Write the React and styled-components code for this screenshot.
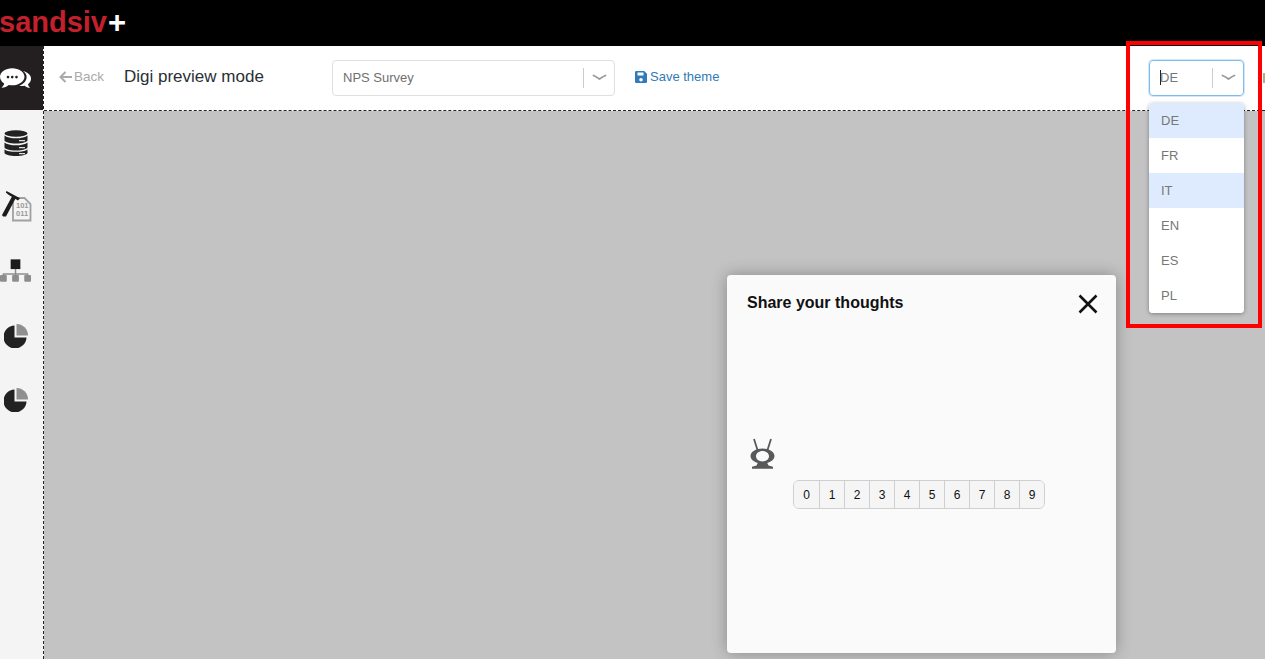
import React from 'react'
import styled, { createGlobalStyle } from 'styled-components'

const GlobalStyle = createGlobalStyle`
    html, body {
        margin: 0;
        height: 100%;
        overflow: hidden;
        font-family: "Liberation Sans", Arial, sans-serif;
        background: #fff;
    }
`

const languages = ['DE', 'FR', 'IT', 'EN', 'ES', 'PL']
const scores = [0, 1, 2, 3, 4, 5, 6, 7, 8, 9]

const Chevron = () => (
    <svg width="15" height="7" viewBox="0 0 15 7" fill="none" stroke="#999" strokeWidth="1.800" strokeLinecap="round">
        <path d="M1.500 1.500 Q4 2.500 7.500 5 Q11 2.500 13.500 1.500" />
    </svg>
)

const ChatIcon = () => (
    <svg width="34" height="25" viewBox="0 0 34 25">
        <path fill="#fff" d="M24.500 4.500c4.800 1.200 8.500 4.300 8.500 8 0 2.500-1.300 4.500-3.200 6 .2 1.500 1 2.800 2.200 3.800-2.500-.1-4.400-.9-6-2.200-1.800.5-3.800.5-5.500.2 5.200-2.200 7.800-5.500 7.800-9.300 0-2.800-1.300-4.900-3.800-6.500z" />
        <path fill="#fff" d="M13 1.500C5.800 1.500 0 5.600 0 10.700c0 3 1.800 5.500 4.500 7.200-.4 1.700-1.500 3.300-3 4.400 3.300-.2 6-1.200 7.900-2.900 1.100.3 2.300.4 3.600.4 7.200 0 13-4 13-9.100S20.200 1.500 13 1.500z" />
        <circle cx="8.500" cy="11" r="1.400" fill="#231f20" />
        <circle cx="13" cy="11" r="1.400" fill="#231f20" />
        <circle cx="17.500" cy="11" r="1.400" fill="#231f20" />
    </svg>
)

const DatabaseIcon = () => (
    <svg width="24" height="26" viewBox="0 0 24 26">
        <ellipse cx="12" cy="3.500" rx="11.500" ry="3.300" fill="#222" />
        <path fill="#222" d="M.5 5.500c2 1.900 6.500 2.800 11.500 2.800s9.500-.9 11.500-2.800v4.700c0 1.800-5.200 3.200-11.500 3.200S.5 12 .5 10.200z" />
        <path fill="#222" d="M.5 12.500c2 1.900 6.500 2.800 11.500 2.800s9.500-.9 11.500-2.800v4.700c0 1.800-5.200 3.200-11.500 3.200S.5 19 .5 17.200z" />
        <path fill="#222" d="M.5 19.200c2 1.900 6.500 2.600 11.500 2.600s9.500-.7 11.500-2.600v3.600c0 1.800-5.200 3.200-11.500 3.200S.5 24.600.5 22.800z" />
        <path stroke="#ddd" strokeWidth="1.200" d="M15 10.700h6M15 17.600h6M15 23.700h6" />
    </svg>
)

const MiningIcon = () => (
    <svg width="31" height="31" viewBox="0 0 31 31">
        <path fill="#f4f4f4" stroke="#a0a0a0" strokeWidth="1.800" d="M12 7h11.500l6 6v16.500H12z" />
        <DocDigits x="15" y="17">101</DocDigits>
        <DocDigits x="15" y="25">011</DocDigits>
        <path fill="#1c1c1c" d="M11 5.500 14.500 7.500 5 25.500 2 25.500 1 24z" />
        <path fill="#1c1c1c" d="M5.500 0 19 7.200 17 9.500 7.500 3.800 4.800 1.500z" />
    </svg>
)

const TreeIcon = () => (
    <svg width="33" height="24" viewBox="0 0 33 24">
        <rect x="11" y="0" width="10" height="10" fill="#1d1d1d" />
        <path stroke="#8d8d8d" strokeWidth="1.500" fill="none" d="M16 10v5M3.500 18v-3h25v3M16 15v3" />
        <rect x="0" y="16" width="7" height="7" rx="1" fill="#8d8d8d" />
        <rect x="12.500" y="16" width="7" height="7" rx="1" fill="#8d8d8d" />
        <rect x="25" y="16" width="7" height="7" rx="1" fill="#8d8d8d" />
    </svg>
)

const PieIcon = () => (
    <svg width="24" height="24" viewBox="0 0 24 24">
        <path fill="#222" d="M10.500 1.500v12h12A11.500 11.500 0 1 1 10.500 1.500z" />
        <path fill="#8f8f8f" d="M12.500 0A11.500 11.500 0 0 1 24 11.500H12.500z" />
    </svg>
)

const SaveIcon = () => (
    <svg width="12" height="12" viewBox="0 0 12 12">
        <path fill="#337ab7" fillRule="evenodd" d="M1.200 0h8L12 2.800v8A1.200 1.200 0 0 1 10.800 12H1.200A1.200 1.200 0 0 1 0 10.800V1.200A1.200 1.200 0 0 1 1.200 0zM2.500 1.500v3h6v-3zM6 7a1.800 1.800 0 1 0 0 3.600A1.800 1.800 0 0 0 6 7z" />
    </svg>
)

const BackArrow = () => (
    <svg width="13" height="12" viewBox="0 0 13 12" fill="none" stroke="#aaa" strokeWidth="2">
        <path d="M6.500 1 1.500 6l5 5M2 6h11" />
    </svg>
)

const RobotIcon = () => (
    <svg width="26" height="32" viewBox="0 0 26 32">
        <path stroke="#58595b" strokeWidth="1.800" d="M4 1 7.500 12M21 1 17.500 12" />
        <path fill="#58595b" fillRule="evenodd" d="M12.500 10.500c6.600 0 12 3.400 12 7.500s-5.400 7.500-12 7.500S.5 22.100.5 18s5.400-7.500 12-7.500zm0 2.500c-3.600 0-6.500 2.400-6.500 5.300s2.900 5.200 6.500 5.200 6.500-2.300 6.500-5.200-2.900-5.300-6.500-5.300z" />
        <path fill="#58595b" d="M8 24.500h9l1.500 3 4.500 1.200v2H2v-2l4.500-1.200z" />
    </svg>
)

const CloseIcon = () => (
    <svg width="20" height="20" viewBox="0 0 20 20" stroke="#111" strokeWidth="2.600">
        <path d="M1.500 1.500 18.500 18.500M18.500 1.500 1.500 18.500" />
    </svg>
)

const App = () => {
    return (
        <Page>
            <GlobalStyle />
            <TopBar>
                <Logo>sandsiv<span>+</span></Logo>
            </TopBar>
            <Body>
                <Sidebar>
                    <NavItem $active><ChatIcon /></NavItem>
                    <NavItem><DatabaseIcon /></NavItem>
                    <NavItem><MiningIcon /></NavItem>
                    <NavItem><TreeIcon /></NavItem>
                    <NavItem><PieIcon /></NavItem>
                    <NavItem><PieIcon /></NavItem>
                </Sidebar>
                <Main>
                    <Toolbar>
                        <BackLink><BackArrow /> Back</BackLink>
                        <Title>Digi preview mode</Title>
                        <SurveySelect>
                            <SelectValue>NPS Survey</SelectValue>
                            <SelectArrow><Chevron /></SelectArrow>
                        </SurveySelect>
                        <SaveLink><SaveIcon /> Save theme</SaveLink>
                        <LangSelect>
                            <LangValue><Caret />DE</LangValue>
                            <SelectArrow><Chevron /></SelectArrow>
                            <LangMenu>
                                {languages.map((lang, i) => (
                                    <LangOption key={lang} $selected={i === 0 || i === 2}>{lang}</LangOption>
                                ))}
                            </LangMenu>
                        </LangSelect>
                        <CutOffMark />
                    </Toolbar>
                    <Canvas>
                        <Survey>
                            <SurveyHead>
                                <SurveyTitle>Share your thoughts</SurveyTitle>
                                <CloseIcon />
                            </SurveyHead>
                            <RobotRow><RobotIcon /></RobotRow>
                            <ScoreRow>
                                {scores.map(n => <Score key={n}>{n}</Score>)}
                            </ScoreRow>
                        </Survey>
                    </Canvas>
                </Main>
            </Body>
            <Highlight />
        </Page>
    )
}

export default App

export const Page = styled.div`
    position: relative;
    width: 1265px;
    height: 659px;
    overflow: hidden;
    display: flex;
    flex-direction: column;
`

export const TopBar = styled.div`
    height: 46px;
    flex: none;
    background: #000;
    display: flex;
    align-items: center;
`

export const Logo = styled.div`
    font-size: 29px;
    font-weight: 700;
    line-height: 32px;
    color: #c4202c;
    margin-top: -2px;
    margin-left: -1px;

    span {
        color: #fff;
        font-size: 31px;
        margin-left: 1px;
        vertical-align: -1px;
        line-height: 0;
    }
`

export const Body = styled.div`
    flex: 1;
    display: flex;
    min-height: 0;
`

export const Sidebar = styled.div`
    width: 43px;
    flex: none;
    background: #f4f4f4;
    border-right: 1px dashed #222;
`

export const NavItem = styled.div`
    height: 64.400px;
    box-sizing: border-box;
    padding-right: 11px;
    display: flex;
    align-items: center;
    justify-content: center;
    background: ${props => (props.$active ? '#231f20' : 'transparent')};
`

export const DocDigits = styled.text`
    font-family: "Liberation Sans", Arial, sans-serif;
    font-size: 7.500px;
    font-weight: 700;
    fill: #9a9a9a;
`

export const Main = styled.div`
    flex: 1;
    display: flex;
    flex-direction: column;
    min-width: 0;
`

export const Toolbar = styled.div`
    height: 65px;
    flex: none;
    box-sizing: border-box;
    border-bottom: 1px dashed #222;
    background: #fff;
    display: flex;
    align-items: center;
    padding: 0 0 1px 15px;
`

export const BackLink = styled.div`
    display: flex;
    align-items: center;
    gap: 2px;
    width: 65px;
    padding-bottom: 2px;
    font-size: 13.500px;
    color: #aaa;
`

export const Title = styled.div`
    width: 208px;
    padding-bottom: 2px;
    font-size: 17px;
    color: #2a2f36;
`

export const SurveySelect = styled.div`
    width: 283px;
    height: 36px;
    box-sizing: border-box;
    border: 1px solid #dfdfdf;
    border-radius: 4px;
    display: flex;
    align-items: center;
`

export const SelectValue = styled.div`
    flex: 1;
    padding-left: 10px;
    font-size: 13px;
    color: #6f6f6f;
`

export const SelectArrow = styled.div`
    width: 30px;
    height: 20px;
    border-left: 1px solid #ccc;
    display: flex;
    align-items: center;
    justify-content: center;
`

export const SaveLink = styled.div`
    display: flex;
    align-items: center;
    gap: 3px;
    margin-left: 20px;
    padding-bottom: 2px;
    font-size: 13px;
    color: #337ab7;
`

export const LangSelect = styled.div`
    position: relative;
    margin-left: auto;
    width: 95px;
    height: 36px;
    box-sizing: border-box;
    border: 1px solid #7fbcec;
    border-radius: 4px;
    box-shadow: 0 0 0 1px rgba(127, 188, 236, 0.35);
    display: flex;
    align-items: center;
`

export const CutOffMark = styled.div`
    width: 2px;
    height: 10px;
    flex: none;
    margin-left: 19px;
    background: #b9a98a;
`

export const LangValue = styled.div`
    flex: 1;
    display: flex;
    align-items: center;
    padding-left: 10px;
    font-size: 13px;
    color: #777;
`

export const Caret = styled.span`
    width: 1px;
    height: 15px;
    background: #222;
    margin-right: -1px;
`

export const LangMenu = styled.div`
    position: absolute;
    z-index: 3;
    top: 42px;
    left: -1px;
    width: 95px;
    background: #fff;
    border-radius: 4px;
    overflow: hidden;
    box-shadow: 0 1px 4px rgba(0, 0, 0, 0.35);
`

export const LangOption = styled.div`
    height: 35px;
    display: flex;
    align-items: center;
    padding-left: 12px;
    font-size: 13px;
    color: #777;
    background: ${props => (props.$selected ? '#deebff' : '#fff')};
`

export const Canvas = styled.div`
    position: relative;
    flex: 1;
    background: #c3c3c3;
`

export const Survey = styled.div`
    position: absolute;
    left: 683px;
    top: 164px;
    width: 389px;
    height: 378px;
    box-sizing: border-box;
    padding: 19px 18px 0 20px;
    background: #fafafa;
    border-radius: 4px;
    box-shadow: 0 0 16px rgba(0, 0, 0, 0.3);
`

export const SurveyHead = styled.div`
    display: flex;
    justify-content: space-between;
    align-items: flex-start;
`

export const SurveyTitle = styled.div`
    font-size: 16px;
    line-height: 18px;
    font-weight: 700;
    color: #111;
`

export const RobotRow = styled.div`
    margin-top: 124px;
    margin-left: 3px;
    height: 32px;
`

export const ScoreRow = styled.div`
    display: flex;
    width: fit-content;
    margin: 10px 0 0 46px;
    border: 1px solid #cfcfcf;
    border-radius: 6px;
    overflow: hidden;
`

export const Score = styled.div`
    width: 24px;
    height: 27px;
    display: flex;
    align-items: center;
    justify-content: center;
    background: #f5f5f5;
    border-left: 1px solid #cfcfcf;
    font-size: 12px;
    color: #111;

    &:first-child {
        width: 25px;
        border-left: none;
    }
`

export const Highlight = styled.div`
    position: absolute;
    z-index: 5;
    left: 1126px;
    top: 41px;
    width: 136px;
    height: 287px;
    box-sizing: border-box;
    border: 4px solid #f00;
    pointer-events: none;
`
